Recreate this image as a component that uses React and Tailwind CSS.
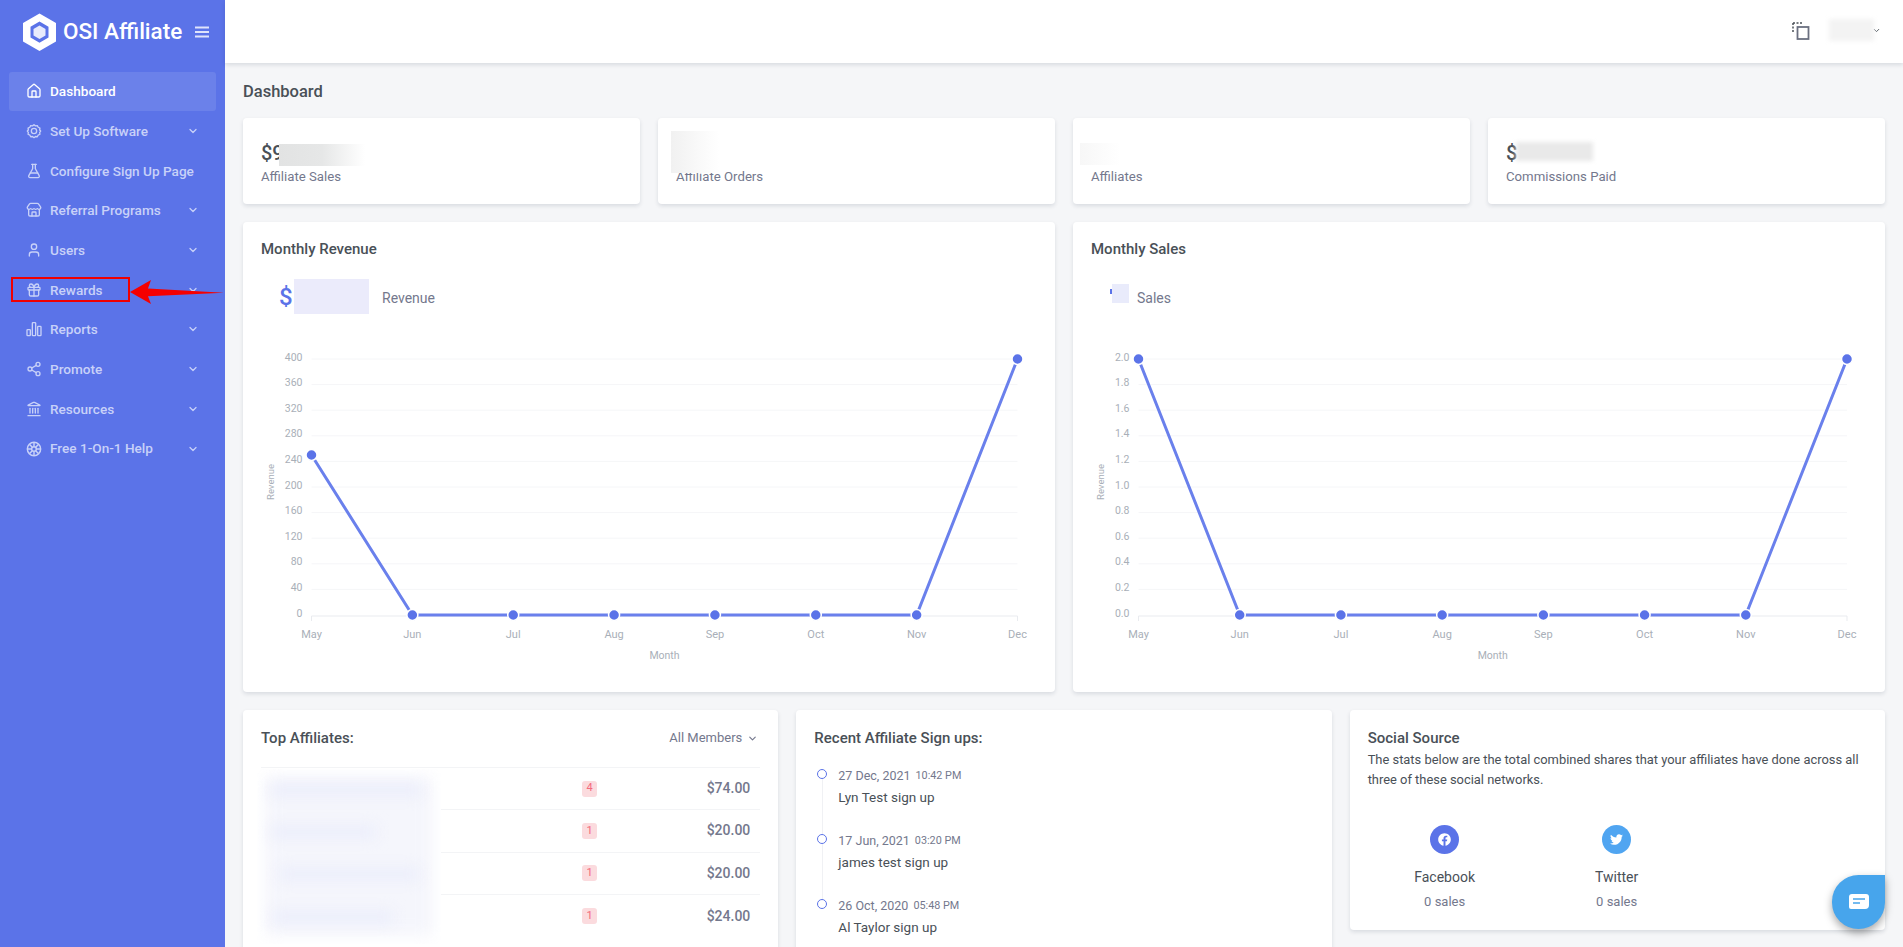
import React from "react";
import { House, FlaskConical, Store, User, Gift, Share2, Landmark, ChevronDown } from "lucide-react";
import { FaFacebook, FaTwitter } from "react-icons/fa";

const CogIcon = () => (
  <svg width="16" height="16" viewBox="0 0 24 24" fill="none" stroke="currentColor" strokeWidth="2">
    <path d="M12 2.500l2.200 1.800 2.800-.4 1.300 2.500 2.600 1.200-.4 2.800L22 12l-1.500 2.100.4 2.800-2.600 1.200-1.300 2.500-2.800-.4L12 22l-2.200-1.800-2.800.4-1.300-2.500-2.600-1.200.4-2.800L2 12l1.500-1.600-.4-2.800 2.600-1.200 1.300-2.500 2.800.4z" strokeLinejoin="round" />
    <circle cx="12" cy="12" r="4" />
  </svg>
);
const BarsIcon = () => (
  <svg width="16" height="16" viewBox="0 0 24 24" fill="none" stroke="currentColor" strokeWidth="2" strokeLinejoin="round">
    <rect x="1.500" y="13" width="5" height="9" rx="1" />
    <rect x="9.500" y="2.500" width="5" height="19.500" rx="1" />
    <rect x="17.500" y="8" width="5" height="14" rx="1" />
  </svg>
);
const HelpIcon = () => (
  <svg width="16" height="16" viewBox="0 0 24 24" fill="none" stroke="currentColor" strokeWidth="2.200">
    <circle cx="12" cy="12" r="10" />
    <circle cx="12" cy="12" r="3.500" />
    <path d="M12 2v6M12 16v6M2 12h6M16 12h6M5 5l4.500 4.500M14.500 14.500L19 19M19 5l-4.500 4.500M9.500 14.500L5 19" />
  </svg>
);

const nav = [
  { label: "Dashboard", Icon: () => <House size={16} strokeWidth={2} />, active: true },
  { label: "Set Up Software", Icon: CogIcon, arrow: true },
  { label: "Configure Sign Up Page", Icon: () => <FlaskConical size={16} strokeWidth={2} /> },
  { label: "Referral Programs", Icon: () => <Store size={16} strokeWidth={2} />, arrow: true },
  { label: "Users", Icon: () => <User size={16} strokeWidth={2} />, arrow: true },
  { label: "Rewards", Icon: () => <Gift size={16} strokeWidth={2} />, arrow: true },
  { label: "Reports", Icon: BarsIcon, arrow: true },
  { label: "Promote", Icon: () => <Share2 size={16} strokeWidth={2} />, arrow: true },
  { label: "Resources", Icon: () => <Landmark size={16} strokeWidth={2} />, arrow: true },
  { label: "Free 1-On-1 Help", Icon: HelpIcon, arrow: true },
];

function Logo() {
  return (
    <svg width="35" height="38" viewBox="0 0 35 38" className="shrink-0">
      <path fillRule="evenodd" fill="#fff" d="M17.500 0.500L34 10v18.500L17.500 38 1 28.500V10zM17.500 8.500L8.500 13.700v10.800l9 5.200 9-5.200V13.700z" />
      <path fill="#e8ebfc" d="M17.500 12.500l6 3.500v6.500l-6 3.500-6-3.500V16z" />
    </svg>
  );
}

function Sidebar() {
  return (
    <aside className="w-[225px] shrink-0 bg-[#5b73e8] h-screen flex flex-col relative">
      <div className="h-[63px] flex items-center pl-[22px]">
        <Logo />
        <span className="ml-[6px] text-white text-[22.500px] font-medium leading-none">OSI Affiliate</span>
        <svg width="14" height="12" viewBox="0 0 14 12" className="ml-[13px]">
          <path d="M0 1.500h14M0 6h14M0 10.500h14" stroke="#dfe4fb" strokeWidth="2" />
        </svg>
      </div>
      <nav className="px-[9px] mt-[8.500px] flex flex-col">
        {nav.map(({ label, Icon, active, arrow }) => (
          <div
            key={label}
            className={`h-[39.700px] flex items-center pl-[16.500px] pr-[17px] rounded-[3px] text-[13.600px] ${
              active ? "bg-[#6b81ea] text-white font-medium" : "text-[#c8d1f8] font-medium"
            }`}
          >
            <span className="w-[24.500px] shrink-0 flex"><Icon /></span>
            <span className="flex-1 whitespace-nowrap">{label}</span>
            {arrow && <ChevronDown size={12} strokeWidth={2.500} />}
          </div>
        ))}
      </nav>
      <div className="absolute left-[11px] top-[277px] w-[119px] h-[25px] border-2 border-[#f00000]" />
      <svg className="absolute left-[128px] top-[278px]" width="98" height="26" viewBox="0 0 98 26">
        <path d="M2 14L23 2l-3 8.500 76 4.300-76 3.400 3 7.800z" fill="#f50000" />
      </svg>
    </aside>
  );
}

function Card({ className = "", children }) {
  return <div className={`bg-white rounded-[4px] shadow-[0_2px_4px_rgba(15,34,58,0.12)] ${className}`}>{children}</div>;
}

function Stat({ prefix, label, blur }) {
  return (
    <Card className="relative h-[86px] pl-[18px] pt-[24px]">
      <div className="h-[22px] text-[20px] leading-[22px] font-medium text-[#495057]">{prefix}</div>
      <div className="mt-[3px] text-[13.200px] leading-[20px] text-[#74788d]">{label}</div>
      {blur}
    </Card>
  );
}

function Chart({ yLabels, points, plotL, plotR, titleX }) {
  const months = ["May", "Jun", "Jul", "Aug", "Sep", "Oct", "Nov", "Dec"];
  const yTop = 137;
  const yBot = 393;
  const step = (plotR - plotL) / 7;
  const xs = months.map((_, i) => plotL + i * step);
  const n = yLabels.length - 1;
  const pts = points.map((p, i) => [xs[i], yBot - p * (yBot - yTop)]);
  return (
    <svg width="812" height="470" viewBox="0 0 812 470" className="absolute left-0 top-0 pointer-events-none">
      {yLabels.map((l, i) => {
        const y = yBot - (i / n) * (yBot - yTop);
        return (
          <g key={l}>
            {i > 0 && <line x1={plotL} x2={plotR} y1={y} y2={y} stroke="#f5f6f8" strokeWidth="1" />}
            <text x={plotL - 9} y={y} dy="1.500" fontSize="10.500" fill="#a9afb8" textAnchor="end">{l}</text>
          </g>
        );
      })}
      <line x1={plotL} x2={plotR} y1={yBot + 1} y2={yBot + 1} stroke="#e9ebef" />
      {xs.map((x) => <line key={x} x1={x} x2={x} y1={yBot + 1} y2={yBot + 6} stroke="#e9ebef" />)}
      {months.map((m, i) => (
        <text key={m} x={xs[i]} y={416} fontSize="11" fill="#a9afb8" textAnchor="middle">{m}</text>
      ))}
      <text x={(plotL + plotR) / 2} y={437} fontSize="10.500" fill="#a9afb8" textAnchor="middle">Month</text>
      <text transform={`translate(${titleX},${(yTop + yBot) / 2 - 5}) rotate(-90)`} fontSize="9.500" fill="#a9afb8" textAnchor="middle">Revenue</text>
      <polyline points={pts.map((p) => p.join(",")).join(" ")} fill="none" stroke="#6a80ec" strokeWidth="3" />
      {pts.map((p, i) => <circle key={i} cx={p[0]} cy={p[1]} r="5.500" fill="#5b73e8" stroke="#fff" strokeWidth="1.500" />)}
    </svg>
  );
}

function ChartCard({ title, children, chart }) {
  return (
    <Card className="relative h-[470px]">
      <div className="absolute left-[18px] top-[17px] text-[15px] leading-[20px] font-medium text-[#495057] z-10">{title}</div>
      {children}
      {chart}
    </Card>
  );
}

const rows = [["4", "$74.00"], ["1", "$20.00"], ["1", "$20.00"], ["1", "$24.00"]];

function TopAffiliates() {
  return (
    <Card className="h-[300px] px-[18px] pt-[18px]">
      <div className="flex items-center justify-between h-[20px]">
        <div className="text-[15px] font-medium text-[#495057]">Top Affiliates:</div>
        <div className="flex items-center gap-[5px] text-[13px] text-[#74788d]">All Members <ChevronDown size={11} strokeWidth={2.500} className="mr-[2px]" /></div>
      </div>
      <div className="relative mt-[19px] border-t border-[#f3f4f6]">
        {rows.map(([n, v], i) => (
          <div key={i} className={`h-[42.300px] flex items-center ${i < rows.length - 1 ? "border-b border-[#f3f4f6]" : ""}`}>
            <div className="w-[321px]" />
            <span className="w-[15px] h-[16px] flex items-center justify-center rounded-[3px] bg-[#fbdbde] text-[#f46a7c] text-[11px]">{n}</span>
            <span className="ml-auto mr-[10px] text-[14px] font-medium text-[#74788d]">{v}</span>
          </div>
        ))}
        <div className="absolute left-[-4px] top-[1px] w-[184px] h-[175px] bg-white overflow-hidden">
          <div className="absolute inset-[8px] bg-[#f5f6fc] blur-[8px]" />
          <div className="absolute left-[14px] top-[14px] w-[150px] h-[14px] bg-[#eceefb] blur-[7px]" />
          <div className="absolute left-[14px] top-[56px] w-[105px] h-[14px] bg-[#eceefb] blur-[7px]" />
          <div className="absolute left-[22px] top-[98px] w-[140px] h-[14px] bg-[#eceefb] blur-[7px]" />
          <div className="absolute left-[16px] top-[141px] w-[120px] h-[14px] bg-[#eceefb] blur-[7px]" />
        </div>
      </div>
    </Card>
  );
}

const feed = [
  ["27 Dec, 2021", "10:42 PM", "Lyn Test sign up"],
  ["17 Jun, 2021", "03:20 PM", "james test sign up"],
  ["26 Oct, 2020", "05:48 PM", "Al Taylor sign up"],
];

function Recent() {
  return (
    <Card className="h-[300px] px-[18px] pt-[18px]">
      <div className="h-[20px] text-[15px] leading-[20px] font-medium text-[#495057]">Recent Affiliate Sign ups:</div>
      <div className="mt-[21px] flex flex-col">
        {feed.map(([d, t, txt], i) => (
          <div key={txt} className="relative h-[65px] pl-[24px]">
            {i < feed.length - 1 && <div className="absolute left-[8px] top-[9px] h-[60px] w-px bg-[#f0f1f4]" />}
            <div className="absolute left-[3px] top-[0px] w-[10px] h-[10px] rounded-full border-[1.500px] border-[#5b73e8] bg-white" />
            <div className="flex items-center h-[12px] mt-[1px] text-[#74788d]">
              <span className="text-[12.500px]">{d}</span>
              <span className="ml-[5px] text-[10.800px]">{t}</span>
            </div>
            <div className="mt-[5px] text-[13.500px] leading-[20px] text-[#495057]">{txt}</div>
          </div>
        ))}
      </div>
    </Card>
  );
}

function Social() {
  const items = [
    ["Facebook", <FaFacebook size={13} />, "bg-[#5b73e8]"],
    ["Twitter", <FaTwitter size={13} />, "bg-[#50a5f1]"],
  ];
  return (
    <Card className="h-[220px] px-[18px] pt-[18px]">
      <div className="h-[20px] text-[15px] leading-[20px] font-medium text-[#495057]">Social Source</div>
      <p className="mt-[2px] text-[12.900px] leading-[20px] text-[#495057]">
        The stats below are the total combined shares that your affiliates have done across all three of these social networks.
      </p>
      <div className="flex ml-[-9px] mt-[35px]">
        {items.map(([n, ic, bg]) => (
          <div key={n} className="w-[172px] flex flex-col items-center">
            <div className={`w-[29px] h-[29px] rounded-full flex items-center justify-center text-white ${bg}`}>{ic}</div>
            <div className="mt-[13px] text-[14px] leading-[20px] font-normal text-[#495057]">{n}</div>
            <div className="mt-[5px] text-[13px] leading-[20px] text-[#74788d]">0 sales</div>
          </div>
        ))}
      </div>
    </Card>
  );
}

export default function App() {
  return (
    <div className="flex h-screen overflow-hidden bg-[#f5f6f8] text-[#495057]" style={{ fontFamily: '"Roboto", "Liberation Sans", sans-serif' }}>
      <Sidebar />
      <div className="flex-1 min-w-0 flex flex-col">
        <header className="h-[63px] shrink-0 bg-white shadow-[0_2px_4px_rgba(15,34,58,0.12)] flex items-center justify-end z-10 relative pr-[22px]">
          <svg width="18" height="18" viewBox="0 0 18 18" fill="none" className="mb-[1px]">
            <path d="M1 1h9M1 1v9" stroke="#495057" strokeWidth="1.500" strokeDasharray="2 1.500" />
            <rect x="5.500" y="5" width="11" height="12" stroke="#6b7080" strokeWidth="1.800" />
          </svg>
          <div className="w-[45px] h-[22px] ml-[19px] mb-[4px] bg-[#f3f3f3] blur-[2px]" />
          <ChevronDown size={9} strokeWidth={2.500} className="ml-[-2px] mb-[3px] text-[#495057]" />
        </header>
        <main className="flex-1 px-[18px] overflow-hidden">
          <h1 className="h-[55px] pt-[4px] flex items-center text-[16.500px] font-medium text-[#495057]">Dashboard</h1>
          <div className="grid grid-cols-4 gap-[18px]">
            <Stat prefix="$9" label="Affiliate Sales" blur={<div className="absolute left-[36px] top-[26px] w-[86px] h-[22px] bg-gradient-to-r from-[#e2e3e3] via-[#e6e7e7] to-white" />} />
            <Stat prefix="" label="Affiliate Orders" blur={<div className="absolute left-[13px] top-[13px] w-[48px] h-[42px] bg-gradient-to-r from-[#f1f1f1] to-white" />} />
            <Stat prefix="" label="Affiliates" blur={<div className="absolute left-[7px] top-[25px] w-[40px] h-[22px] bg-gradient-to-r from-[#f7f7f7] to-white" />} />
            <Stat prefix="$" label="Commissions Paid" blur={<div className="absolute left-[28px] top-[24px] w-[77px] h-[19px] bg-[#e9e9e9] blur-[2px]" />} />
          </div>
          <div className="grid grid-cols-2 gap-[18px] mt-[18px]">
            <ChartCard
              title="Monthly Revenue"
              chart={<Chart yLabels={["0","40","80","120","160","200","240","280","320","360","400"]} points={[0.625,0,0,0,0,0,0,1]} plotL={68.500} plotR={774.500} titleX={31} />}
            >
              <div className="absolute left-[36px] top-[57px] flex items-center h-[35px]">
                <span className="text-[24px] font-medium text-[#5b73e8] w-[15px]">$</span>
                <div className="w-[75px] h-[35px] bg-[#ebebfb]" />
                <span className="ml-[13px] mt-[4px] text-[14px] text-[#74788d]">Revenue</span>
              </div>
            </ChartCard>
            <ChartCard
              title="Monthly Sales"
              chart={<Chart yLabels={["0.0","0.2","0.4","0.6","0.8","1.0","1.2","1.4","1.6","1.8","2.0"]} points={[1,0,0,0,0,0,0,1]} plotL={65.500} plotR={774} titleX={31} />}
            >
              <div className="absolute left-[37px] top-[62px] flex items-start h-[19px]">
                <div className="w-[2px] h-[5px] mt-[5px] bg-[#5b73e8]" />
                <div className="w-[17px] h-[19px] bg-[#e9ebfb]" />
                <span className="ml-[8px] mt-[4px] text-[14px] text-[#74788d]">Sales</span>
              </div>
            </ChartCard>
          </div>
          <div className="grid grid-cols-3 gap-[18px] mt-[18px] items-start">
            <TopAffiliates />
            <Recent />
            <Social />
          </div>
        </main>
      </div>
      <div className="fixed left-[1832px] top-[875px] w-[53px] h-[54px] rounded-full rounded-tr-[4px] bg-[#47a5ec] shadow-[0_4px_8px_rgba(0,0,0,0.35)] flex items-center justify-center">
        <svg width="22" height="18" viewBox="0 0 22 18">
          <path d="M4 1h14a3 3 0 013 3v8a4 4 0 01-4 4H3a2 2 0 01-2-2V4a3 3 0 013-3z" fill="#fff" />
          <path d="M5 6h12M5 10h7" stroke="#47a5ec" strokeWidth="1.500" />
        </svg>
      </div>
    </div>
  );
}
